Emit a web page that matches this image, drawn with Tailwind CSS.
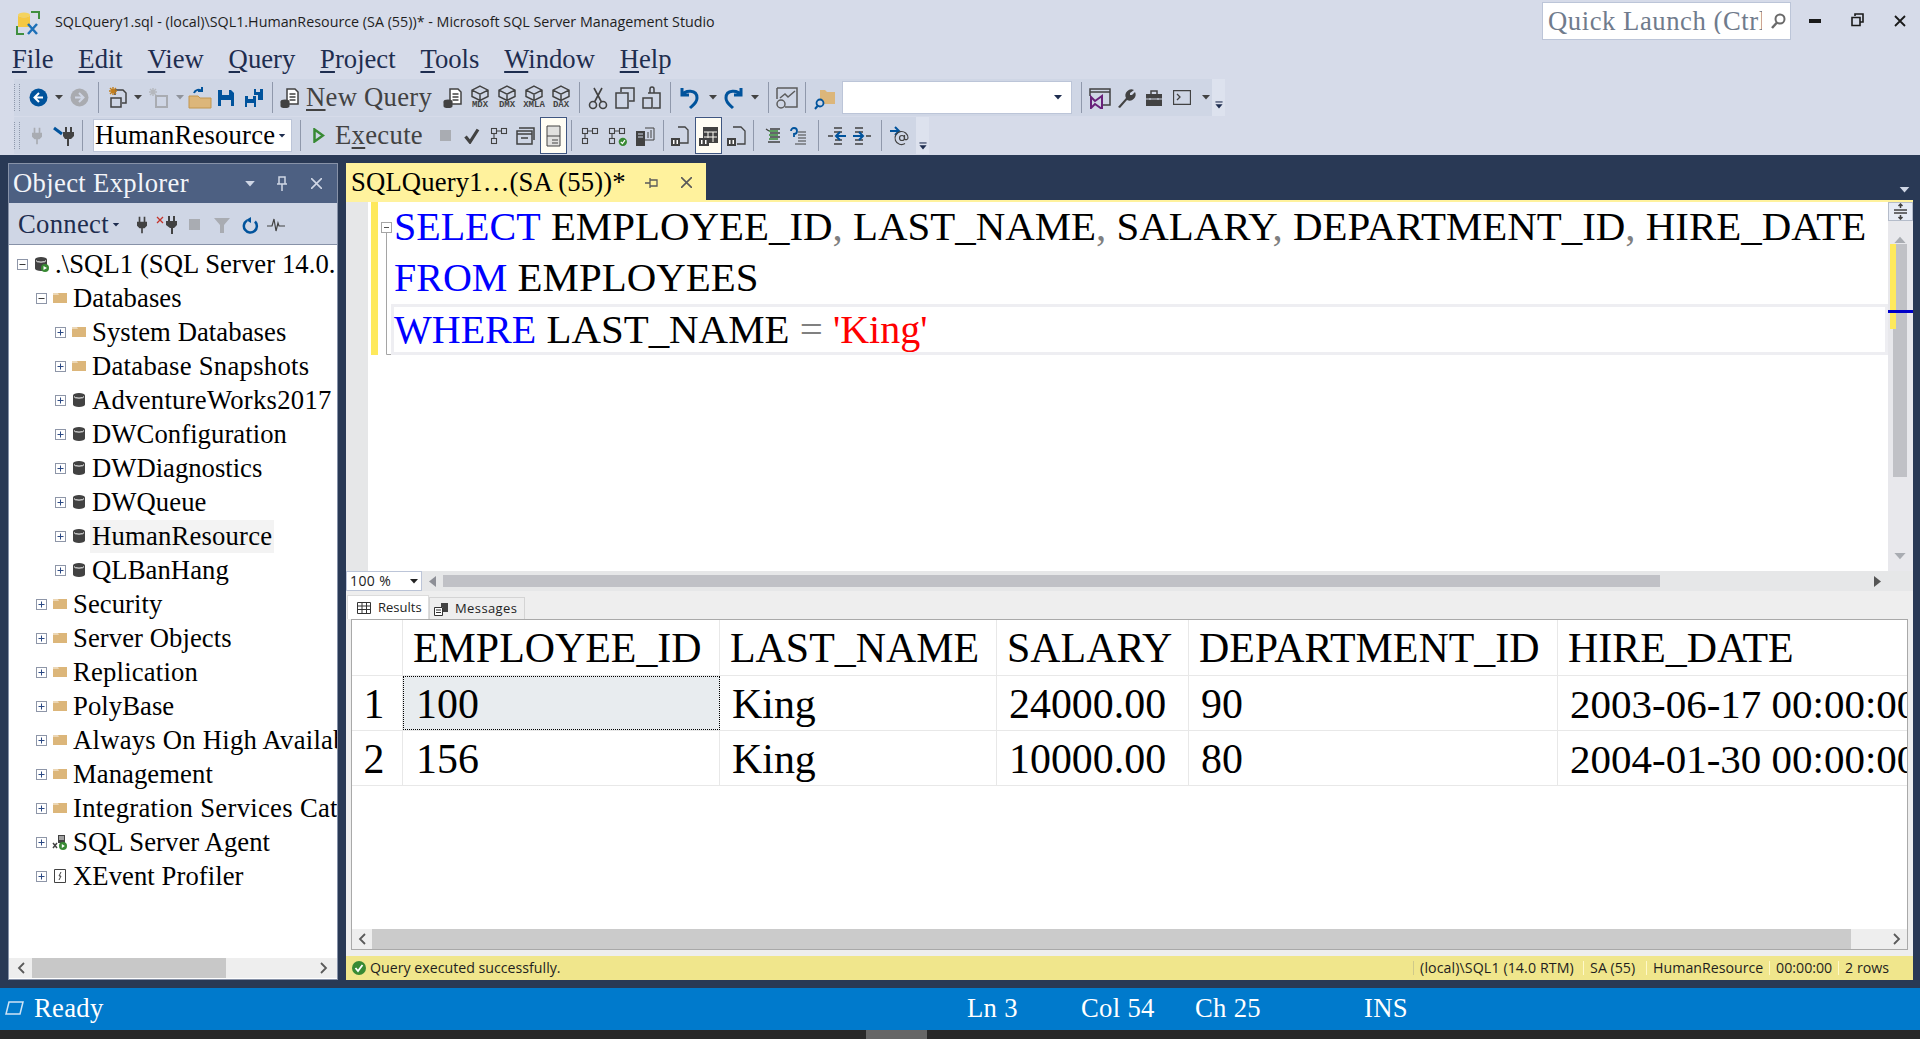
<!DOCTYPE html>
<html lang="en">
<head>
<meta charset="UTF-8">
<title>SQLQuery1.sql - Microsoft SQL Server Management Studio</title>
<script src="https://cdn.jsdelivr.net/npm/@tailwindcss/browser@4"></script>
</head>
<body class="h-[1039px] w-[1920px] overflow-hidden flex flex-col bg-[#d6dbe9] text-[26.67px] leading-none text-[#1e2d4f] font-['Liberation_Serif',serif]">

<!-- shared icons -->
<svg class="hidden">
  <defs>
    <symbol id="caret" viewBox="0 0 8 5"><path d="M0 0h8L4 4.500z" fill="currentColor"/></symbol>
    <symbol id="chev" viewBox="0 0 14 14"><path d="M2 2h10v1.500H2z" fill="currentColor"/><path d="M2 6h10L7 12z" fill="currentColor"/></symbol>
    <symbol id="plug" viewBox="0 0 24 24"><path d="M8 2h2v6H8zM14 2h2v6h-2zM6 8h12v5l-3 3h-2v6h-2v-6H9l-3-3z" fill="currentColor"/></symbol>
    <symbol id="doc" viewBox="0 0 24 24"><path d="M9 3h8l3 3v12H9z" fill="#fff" stroke="#424242" stroke-width="1.500"/><path d="M11.500 8h6M11.500 11h6M11.500 14h6" stroke="#424242" stroke-width="1.300"/><ellipse cx="7" cy="15.500" rx="4.500" ry="2" fill="#424242"/><path d="M2.500 16v4a4.500 2 0 0 0 9 0v-4z" fill="#424242"/></symbol>
    <symbol id="cube" viewBox="0 0 24 24"><path d="M12 3l7 3.500V12l-7 3.500L5 12V6.500zM5 6.500l7 3.500 7-3.500M12 10v5" fill="none" stroke="#424242" stroke-width="1.300"/></symbol>
    <symbol id="plan" viewBox="0 0 24 24" fill="none" stroke="#424242" stroke-width="1.300"><rect x="3" y="3" width="6" height="6"/><rect x="15" y="3" width="6" height="6"/><rect x="3" y="15" width="6" height="6"/><path d="M9 6h6M6 9v6"/></symbol>
    <symbol id="out" viewBox="0 0 24 24"><path d="M10 3h7l3 3v13h-9" fill="none" stroke="#424242" stroke-width="1.300"/><rect x="3" y="14" width="9" height="8" fill="#424242"/><path d="M5 16h1.500v4H5zM8.500 16H10v4H8.500z" fill="#fff"/></symbol>
    <symbol id="plus" viewBox="0 0 11 11"><rect x=".5" y=".5" width="10" height="10" fill="#fff" stroke="#8e96a8"/><path d="M2.500 5.500h6M5.500 2.500v6" stroke="#2c4a85"/></symbol>
    <symbol id="minus" viewBox="0 0 11 11"><rect x=".5" y=".5" width="10" height="10" fill="#fff" stroke="#8e96a8"/><path d="M2.500 5.500h6" stroke="#3b3b3b"/></symbol>
    <symbol id="folder" viewBox="0 0 16 16"><path d="M1 3h14v10H1z" fill="#dcb67a"/><path d="M1 3h5l1 2H1z" fill="#fff" opacity=".45"/></symbol>
    <symbol id="db" viewBox="0 0 16 16"><path d="M2 3.500a6 2.500 0 0 1 12 0v9a6 2.500 0 0 1-12 0z" fill="#424242"/><path d="M3 4.500a5 1.600 0 0 0 10 0" fill="none" stroke="#fff" stroke-width="1"/></symbol>
  </defs>
</svg>

<!-- title bar -->
<header class="h-[42px] flex items-start shrink-0">
  <svg class="w-[26px] h-[26px] ml-[15px] mt-[10px] shrink-0" viewBox="0 0 26 26">
    <path d="M16 2h8v7M2 16v8h7M2 2" fill="none" stroke="#3f8f3f" stroke-width="2"/>
    <ellipse cx="9" cy="5" rx="6" ry="2.500" fill="#f4d35e"/>
    <path d="M3 5v12h12V5a6 2.500 0 0 1-12 0z" fill="#f5c842"/>
    <path d="M13 24l9-10M22 24l-9-10" stroke="#1e70b8" stroke-width="2.500"/>
  </svg>
  <span class="ml-[14px] mt-[15px] text-[14.3px] text-[#1e1e1e] font-['Open_Sans',sans-serif] whitespace-nowrap">SQLQuery1.sql - (local)\SQL1.HumanResource (SA (55))* - Microsoft SQL Server Management Studio</span>
  <div class="ml-auto mt-[2px] w-[249px] h-[38px] bg-white border border-[#bcc5d8] flex items-center pl-[5px] text-[#707b8c] overflow-hidden">
    <span class="whitespace-nowrap w-[214px] overflow-hidden tracking-[0.55px]">Quick Launch (Ctrl+Q)</span>
    <svg class="w-[18px] h-[18px] ml-[7px] shrink-0 text-[#6a6a6a]" viewBox="0 0 18 18"><circle cx="11" cy="7" r="4.500" fill="none" stroke="currentColor" stroke-width="2"/><path d="M8 10.500L3 16" stroke="currentColor" stroke-width="2.500"/></svg>
  </div>
  <div class="w-[129px] flex items-start text-[#1a1a1a] shrink-0">
    <svg class="w-[12px] h-[4px] ml-[18px] mt-[19px]" viewBox="0 0 12 4"><path d="M0 0h12v4H0z" fill="currentColor"/></svg>
    <svg class="w-[13px] h-[14px] ml-[30px] mt-[13px]" viewBox="0 0 13 14"><path d="M4 3V1h8v8h-3M1 4.500h8v8H1z" fill="none" stroke="currentColor" stroke-width="1.600"/></svg>
    <svg class="w-[12px] h-[12px] ml-[30px] mt-[15px]" viewBox="0 0 12 12"><path d="M1 1l10 10M11 1L1 11" stroke="currentColor" stroke-width="1.800"/></svg>
  </div>
</header>

<!-- menu -->
<nav class="h-[35px] mb-[2px] flex items-center gap-[24.85px] pl-[12px] shrink-0">
  <span><span class="underline underline-offset-[3px]">F</span>ile</span>
  <span><span class="underline underline-offset-[3px]">E</span>dit</span>
  <span><span class="underline underline-offset-[3px]">V</span>iew</span>
  <span><span class="underline underline-offset-[3px]">Q</span>uery</span>
  <span><span class="underline underline-offset-[3px]">P</span>roject</span>
  <span><span class="underline underline-offset-[3px]">T</span>ools</span>
  <span><span class="underline underline-offset-[3px]">W</span>indow</span>
  <span><span class="underline underline-offset-[3px]">H</span>elp</span>
</nav>

<!-- toolbar 1 -->
<div class="h-[37px] flex ml-[14px] shrink-0 text-[#424242]">
  <div class="flex items-center bg-[#cfd6e5] h-full">
    <div class="w-[12px] flex"><div class="w-[6px] h-[27px] border-x border-dotted border-[#8f98ab]"></div></div>
    <div class="w-[24px] flex justify-center"><svg class="w-[19px] h-[19px]" viewBox="0 0 19 19"><circle cx="9.500" cy="9.500" r="9" fill="#00539c"/><path d="M10 5L5.500 9.500 10 14M6 9.500h8" fill="none" stroke="#fff" stroke-width="2"/></svg></div>
    <div class="w-[18px] flex justify-center"><svg class="w-[8px] h-[5px]"><use href="#caret"/></svg></div>
    <div class="w-[22px] flex justify-center"><svg class="w-[19px] h-[19px]" viewBox="0 0 19 19"><circle cx="9.500" cy="9.500" r="9" fill="#a9abb0"/><path d="M9 5l4.500 4.500L9 14M13 9.500H5" fill="none" stroke="#cfd6e5" stroke-width="2"/></svg></div>
    <div class="w-[16px] flex justify-center"><div class="w-px h-[31px] bg-[#8f98ab]"></div></div>
    <div class="w-[28px] flex justify-center"><svg class="w-[24px] h-[24px] -ml-[5px]" viewBox="0 0 24 24"><path d="M9 9V4h8l3 3v10h-4M5 12h10v9H5z" fill="none" stroke="#424242" stroke-width="1.500"/><path d="M7 1v8M3 5h8M4 2l6 6M10 2L4 8" stroke="#c27d1a" stroke-width="1.400"/></svg></div>
    <div class="w-[8px] flex justify-center"><svg class="w-[8px] h-[5px]"><use href="#caret"/></svg></div>
    <div class="w-[32px] flex justify-center"><svg class="w-[24px] h-[24px]" viewBox="0 0 24 24"><path d="M10 10h11v11H10z" fill="none" stroke="#a9acb2" stroke-width="2"/><path d="M7 2v8M3 6h8M4 3l6 6M10 3L4 9" stroke="#b5b8bd" stroke-width="1.400"/></svg></div>
    <div class="w-[12px] flex justify-center text-[#8f939b]"><svg class="w-[8px] h-[5px]"><use href="#caret"/></svg></div>
    <div class="w-[28px] flex justify-center"><svg class="w-[24px] h-[24px]" viewBox="0 0 24 24"><path d="M1 10h9l2 2h11v10H1z" fill="#dcb67a" stroke="#c2964f"/><path d="M6 7a5 5 0 0 1 8-2M14 1v4h-4" fill="none" stroke="#00539c" stroke-width="2"/></svg></div>
    <div class="w-[24px] flex justify-center"><svg class="w-[18px] h-[18px]" viewBox="0 0 18 18"><path d="M1 1h13l3 3v13H1z" fill="#00539c"/><path d="M5 1h7v5H5z" fill="#cfd6e5"/><path d="M4 11h10v6H4z" fill="#cfd6e5"/></svg></div>
    <div class="w-[32px] flex justify-center"><svg class="w-[20px] h-[20px]" viewBox="0 0 20 20"><path d="M1 8h11v11H1z" fill="#00539c"/><path d="M4 8h5v3H4zM3 15h7v4H3z" fill="#cfd6e5"/><path d="M10 1h9v11h-5V7h-4z" fill="#00539c"/><path d="M12 1h4v3h-4z" fill="#cfd6e5"/></svg></div>
    <div class="w-[4px] flex justify-center"><div class="w-px h-[31px] bg-[#8f98ab]"></div></div>
    <div class="w-[32px] flex justify-center"><svg class="w-[24px] h-[24px]"><use href="#doc"/></svg></div>
    <div class="w-[125px] whitespace-nowrap tracking-[0.27px]"><span class="underline underline-offset-[3px]">N</span>ew Query</div>
    <div class="w-[9px]"></div>
    <div class="w-[26px] flex justify-center"><svg class="w-[24px] h-[24px]"><use href="#doc"/></svg></div>
    <div class="w-[28px] flex flex-col items-center"><svg class="w-[22px] h-[16px]" viewBox="3 2 18 14"><use href="#cube" width="24" height="24"/></svg><span class="text-[9px] font-bold font-['Liberation_Mono',monospace]">MDX</span></div>
    <div class="w-[26px] flex flex-col items-center"><svg class="w-[22px] h-[16px]" viewBox="3 2 18 14"><use href="#cube" width="24" height="24"/></svg><span class="text-[9px] font-bold font-['Liberation_Mono',monospace]">DMX</span></div>
    <div class="w-[28px] flex flex-col items-center"><svg class="w-[22px] h-[16px]" viewBox="3 2 18 14"><use href="#cube" width="24" height="24"/></svg><span class="text-[9px] font-bold font-['Liberation_Mono',monospace]">XMLA</span></div>
    <div class="w-[26px] flex flex-col items-center"><svg class="w-[22px] h-[16px]" viewBox="3 2 18 14"><use href="#cube" width="24" height="24"/></svg><span class="text-[9px] font-bold font-['Liberation_Mono',monospace]">DAX</span></div>
    <div class="w-[10px] flex justify-center"><div class="w-px h-[31px] bg-[#8f98ab]"></div></div>
    <div class="w-[28px] flex justify-center"><svg class="w-[22px] h-[24px]" viewBox="0 0 22 24" fill="none" stroke="#424242" stroke-width="1.600"><circle cx="6" cy="19" r="3.500"/><circle cx="16" cy="19" r="3.500"/><path d="M7.500 16L15 2M14.500 16L7 2"/></svg></div>
    <div class="w-[26px] flex justify-center"><svg class="w-[20px] h-[22px]" viewBox="0 0 20 22" fill="none" stroke="#424242" stroke-width="1.500"><path d="M6 5V1h13v13h-5M1 6h12v15H1z"/></svg></div>
    <div class="w-[28px] flex justify-center"><svg class="w-[20px] h-[24px]" viewBox="0 0 20 24" fill="none" stroke="#424242" stroke-width="1.500"><path d="M6 7h12v15h-7M1 12h9v10H1zM8 7V3a2 2 0 0 1 4 0v4"/></svg></div>
    <div class="w-[8px] flex justify-center"><div class="w-px h-[31px] bg-[#8f98ab]"></div></div>
    <div class="w-[32px] flex justify-center"><svg class="w-[22px] h-[24px]" viewBox="0 0 22 24" fill="none" stroke="#00539c" stroke-width="3"><path d="M3 2v7h7M3 9c3-5 15-6 15 3 0 5-4 7-7 10"/></svg></div>
    <div class="w-[14px] flex justify-center"><svg class="w-[8px] h-[5px]"><use href="#caret"/></svg></div>
    <div class="w-[26px] flex justify-center"><svg class="w-[22px] h-[24px]" viewBox="0 0 22 24" fill="none" stroke="#00539c" stroke-width="3"><path d="M19 2v7h-7M19 9C16 4 4 3 4 12c0 5 4 7 7 10"/></svg></div>
    <div class="w-[18px] flex justify-center"><svg class="w-[8px] h-[5px]"><use href="#caret"/></svg></div>
    <div class="w-[8px] flex justify-center"><div class="w-px h-[31px] bg-[#8f98ab]"></div></div>
    <div class="w-[30px] flex justify-center"><svg class="w-[22px] h-[24px]" viewBox="0 0 22 24" fill="none" stroke="#5c5c5c" stroke-width="1.500"><path d="M1 2h20v19H9M1 2v11M4 12l5-4 3 3 7-6"/><circle cx="5" cy="18" r="4"/></svg></div>
    <div class="w-[6px] flex justify-center"><div class="w-px h-[31px] bg-[#8f98ab]"></div></div>
    <div class="w-[34px] flex justify-center"><svg class="w-[22px] h-[24px]" viewBox="0 0 22 24"><path d="M6 4h5l2 2h8v12H6z" fill="#dcb67a"/><circle cx="6" cy="17" r="3.500" fill="#cfd6e5" stroke="#00539c" stroke-width="1.800"/><path d="M3.500 20L1 23" stroke="#00539c" stroke-width="2"/></svg></div>
    <div class="w-[230px] h-[33px] bg-white border border-[#bcc5d8] flex items-center justify-end pr-[9px] text-[#1e2d4f]"><svg class="w-[8px] h-[5px]"><use href="#caret"/></svg></div>
    <div class="w-[18px] flex justify-center"><div class="w-px h-[31px] bg-[#8f98ab]"></div></div>
    <div class="w-[20px] flex justify-center"><svg class="w-[22px] h-[22px] shrink-0" viewBox="0 0 22 22"><path d="M1 5h20M1 9V2h20v16h-7" fill="none" stroke="#424242" stroke-width="1.500"/><path d="M2 10l4 4 7-5v13l-7-5-4 4z" fill="none" stroke="#68217a" stroke-width="2"/></svg></div>
    <div class="w-[34px] flex justify-center"><svg class="w-[20px] h-[20px]" viewBox="0 0 20 20"><path d="M1 19l8-9a6 6 0 0 1 8-8l-4 3v2h2l3-3a6 6 0 0 1-8 8l-7 8z" fill="#424242"/></svg></div>
    <div class="w-[20px] flex justify-center"><svg class="w-[18px] h-[18px] shrink-0" viewBox="0 0 18 18"><path d="M6 5V2h6v3" fill="none" stroke="#424242" stroke-width="1.500"/><path d="M1 5h16v12H1z" fill="#424242"/><path d="M1 10h16M5 9v2M13 9v2" stroke="#cfd6e5"/></svg></div>
    <div class="w-[36px] flex justify-center"><svg class="w-[18px] h-[15px]" viewBox="0 0 18 15" fill="none" stroke="#424242" stroke-width="1.300"><path d="M.5.500h17v14H.5zM4 4l3 3-3 3"/></svg></div>
    <div class="w-[12px] flex justify-center"><svg class="w-[8px] h-[5px]"><use href="#caret"/></svg></div>
  </div>
  <div class="w-[13px] h-full bg-[#dde2ee] flex items-end justify-center pb-[6px] text-[#1e2d4f]"><svg class="w-[10px] h-[10px]"><use href="#chev"/></svg></div>
</div>

<!-- toolbar 2 -->
<div class="h-[37px] mt-[1px] flex ml-[14px] shrink-0 text-[#424242]">
  <div class="flex items-center bg-[#cfd6e5] h-full">
    <div class="w-[12px] flex"><div class="w-[6px] h-[27px] border-x border-dotted border-[#8f98ab]"></div></div>
    <div class="w-[22px] flex justify-center text-[#a9acb2]"><svg class="w-[20px] h-[20px]"><use href="#plug"/></svg></div>
    <div class="w-[32px] flex justify-center"><svg class="w-[24px] h-[24px]" viewBox="0 0 24 24"><path d="M13 3h2v5h-2zM18 3h2v5h-2zM11 8h11v4l-3 3h-2v7h-2v-7h-2l-2-3z" fill="#424242"/><path d="M2 4l8 6" stroke="#00539c" stroke-width="3"/></svg></div>
    <div class="w-[4px] flex justify-center"><div class="w-px h-[31px] bg-[#8f98ab]"></div></div>
    <div class="w-[9px]"></div>
    <div class="w-[199px] h-[33px] bg-white border border-[#bcc5d8] flex items-center pl-[1px] text-black">
      <span class="whitespace-nowrap tracking-[0.2px]">HumanResource</span>
      <svg class="w-[8px] h-[4px] ml-[3px] text-[#1e2d4f]"><use href="#caret"/></svg>
    </div>
    <div class="w-[16px] flex justify-center"><div class="w-px h-[31px] bg-[#8f98ab]"></div></div>
    <div class="w-[22px] flex justify-center"><svg class="w-[12px] h-[15px]" viewBox="0 0 12 15"><path d="M1.500 1.500L10 7.500l-8.500 6z" fill="none" stroke="#388a34" stroke-width="2.500"/></svg></div>
    <div class="w-[5px]"></div>
    <div class="w-[88px] whitespace-nowrap tracking-[0.3px]">E<span class="underline underline-offset-[3px]">x</span>ecute</div>
    <div class="w-[10px]"></div>
    <div class="w-[24px] flex justify-center"><div class="w-[11px] h-[11px] bg-[#a9acb2]"></div></div>
    <div class="w-[30px] flex justify-center"><svg class="w-[16px] h-[16px]" viewBox="0 0 16 16"><path d="M1.500 8.500L6 14 14 1.500" fill="none" stroke="#424242" stroke-width="3.200"/></svg></div>
    <div class="w-[24px] flex justify-center"><svg class="w-[20px] h-[20px]"><use href="#plan"/></svg></div>
    <div class="w-[29px] flex justify-center"><svg class="w-[19px] h-[18px]" viewBox="0 0 19 18" fill="none" stroke="#424242" stroke-width="1.500"><path d="M3 1h15v12M1 4h15v13H1zM1 7h15M5 11h7"/></svg></div>
    <div class="w-[27px] h-full border border-[#3f5681] bg-[#fffdf4] flex items-center justify-center"><svg class="w-[15px] h-[22px]" viewBox="0 0 15 22"><path d="M1 1h13v20H1z" fill="#e0e0de" stroke="#424242"/><path d="M1 11h13M6 15h6M6 18h6" stroke="#424242"/></svg></div>
    <div class="w-[8px] flex justify-center"><div class="w-px h-[31px] bg-[#8f98ab]"></div></div>
    <div class="w-[30px] flex justify-center"><svg class="w-[20px] h-[20px]"><use href="#plan"/></svg></div>
    <div class="w-[24px] flex justify-center"><svg class="w-[20px] h-[20px] overflow-visible" viewBox="0 0 24 24"><use href="#plan" width="24" height="24"/><circle cx="19" cy="19" r="5" fill="#388a34"/><path d="M16.500 19l2 2 3-4" fill="none" stroke="#fff" stroke-width="1.500"/></svg></div>
    <div class="w-[32px] flex justify-center"><svg class="w-[20px] h-[20px]" viewBox="0 0 20 20"><path d="M1 5h9v15H1z" fill="#424242"/><path d="M3 8h5M3 11h5" stroke="#cfd6e5"/><path d="M10 2h9v12h-9" fill="none" stroke="#424242"/><path d="M13 6v6M16 4v8" stroke="#424242"/></svg></div>
    <div class="w-[4px] flex justify-center"><div class="w-px h-[31px] bg-[#8f98ab]"></div></div>
    <div class="w-[30px] flex justify-center"><svg class="w-[24px] h-[24px]"><use href="#out"/></svg></div>
    <div class="w-[27px] h-full border border-[#3f5681] bg-[#fffdf4] flex items-center justify-center"><svg class="w-[24px] h-[24px]" viewBox="0 0 24 24"><path d="M6 3h15v16H6z" fill="#424242"/><path d="M7 8h13M7 13h13M11 8v10M16 8v10" stroke="#fffdf4"/><rect x="2" y="14" width="10" height="8" fill="#424242"/><path d="M4 16h1.500v4H4zM8 16h1.500v4H8z" fill="#fff"/></svg></div>
    <div class="w-[27px] flex justify-center"><svg class="w-[24px] h-[24px]" viewBox="0 0 24 24"><path d="M9 3h8l4 4v13H13" fill="none" stroke="#424242" stroke-width="1.300"/><rect x="3" y="14" width="9" height="8" fill="#424242"/><path d="M5 16h1.500v4H5zM8.500 16H10v4H8.500z" fill="#fff"/></svg></div>
    <div class="w-[8px] flex justify-center"><div class="w-px h-[31px] bg-[#8f98ab]"></div></div>
    <div class="w-[3px]"></div>
    <div class="w-[26px] flex justify-center"><svg class="w-[16px] h-[16px]" viewBox="0 0 16 16"><path d="M1 1l3 2M5 1h10M5 5h10M5 9h10M3 14h12" stroke="#424242" stroke-width="1.300"/><path d="M4 3h9M4 7h9M4 11h9" stroke="#388a34" stroke-width="1.300"/></svg></div>
    <div class="w-[24px] flex justify-center"><svg class="w-[18px] h-[18px]" viewBox="0 0 18 18"><path d="M2 4a3 3 0 1 1 3 3v3" fill="none" stroke="#00539c" stroke-width="1.800"/><path d="M9 5h8M9 8h8M9 11h8M9 14h8M6 17h11" stroke="#424242" stroke-width="1.200"/></svg></div>
    <div class="w-[16px] flex justify-center"><div class="w-px h-[31px] bg-[#8f98ab]"></div></div>
    <div class="w-[22px] flex justify-center"><svg class="w-[20px] h-[18px]" viewBox="0 0 20 18"><path d="M7 1h8M7 17h8M1 9h5M7 5h8M8 13h7" stroke="#424242" stroke-width="1.500"/><path d="M19 9h-9M13 5l-4 4 4 4" fill="none" stroke="#00539c" stroke-width="2"/></svg></div>
    <div class="w-[28px] flex justify-center"><svg class="w-[20px] h-[18px]" viewBox="0 0 20 18"><path d="M3 1h8M3 17h8M14 9h5M3 5h8M3 13h8" stroke="#424242" stroke-width="1.500"/><path d="M1 9h9M7 5l4 4-4 4" fill="none" stroke="#00539c" stroke-width="2"/></svg></div>
    <div class="w-[10px] flex justify-center"><div class="w-px h-[31px] bg-[#8f98ab]"></div></div>
    <div class="w-[26px] flex justify-center"><svg class="w-[20px] h-[20px]" viewBox="0 0 20 20"><path d="M1 5h8M6 1l4 4-4 4" fill="none" stroke="#00539c" stroke-width="2"/><circle cx="13" cy="12" r="2.500" fill="none" stroke="#424242" stroke-width="1.200"/><path d="M15.500 9v4a2 2 0 0 0 3.500-1 6.500 6.500 0 1 0-3 5.500" fill="none" stroke="#424242" stroke-width="1.200"/></svg></div>
    <div class="w-[4px]"></div>
  </div>
  <div class="w-[13px] h-full bg-[#dde2ee] flex items-end justify-center pb-[3px] text-[#1e2d4f]"><svg class="w-[10px] h-[10px]"><use href="#chev"/></svg></div>
</div>

<!-- main -->
<main class="mt-[1px] flex-1 min-h-0 bg-[#293955] flex pt-[8px] pb-[8px] pl-[8px] pr-[7px] gap-[8px]">

  <!-- object explorer -->
  <section class="w-[330px] shrink-0 flex flex-col border border-[#8792a8] bg-white text-black overflow-hidden">
    <div class="h-[39px] shrink-0 bg-[#4d6082] flex items-center text-[#f3f5f9] pl-[4px]">
      <span class="w-[228px] whitespace-nowrap tracking-[0.33px]">Object Explorer</span>
      <svg class="w-[10px] h-[6px] ml-[4px] text-[#cfd6e5]"><use href="#caret"/></svg>
      <svg class="w-[10px] h-[15px] ml-[22px]" viewBox="0 0 10 15" fill="none" stroke="#cfd6e5" stroke-width="1.500"><path d="M2 1h6v7H2zM0 8h10M5 8v7"/></svg>
      <svg class="w-[11px] h-[11px] ml-[24px]" viewBox="0 0 11 11" stroke="#cfd6e5" stroke-width="1.600"><path d="M0 0l11 11M11 0L0 11"/></svg>
    </div>
    <div class="h-[42px] shrink-0 bg-[#cfd6e5] border-b border-[#8792a8] flex items-center pl-[9px] pt-[2px] text-[#1e2d4f]">
      <span class="whitespace-nowrap tracking-[0.3px]">Connect</span>
      <svg class="w-[8px] h-[4px] ml-[3px]"><use href="#caret"/></svg>
      <svg class="w-[20px] h-[20px] ml-[12px] text-[#424242]"><use href="#plug"/></svg>
      <svg class="w-[24px] h-[20px] ml-[4px]" viewBox="0 0 24 20"><path d="M1 2l6 6M7 2L1 8" stroke="#c5332a" stroke-width="1.300"/><path d="M12 1h2v5h-2zM17 1h2v5h-2zM10 6h11v4l-3 3h-1v6h-2v-6h-1l-4-3z" fill="#424242"/></svg>
      <div class="w-[11px] h-[11px] bg-[#a9acb2] ml-[9px]"></div>
      <svg class="w-[16px] h-[16px] ml-[14px]" viewBox="0 0 16 16"><path d="M0 1h16l-6 7v8H6V8z" fill="#a9acb2"/></svg>
      <svg class="w-[17px] h-[18px] ml-[12px]" viewBox="0 0 17 18" fill="none" stroke="#00539c" stroke-width="2.500"><path d="M5 4.500a6.500 6.500 0 1 0 8 1"/><path d="M9 1v6l-5-3z" fill="#00539c" stroke="none"/></svg>
      <svg class="w-[18px] h-[14px] ml-[8px]" viewBox="0 0 18 14" fill="none" stroke="#424242" stroke-width="1.200"><path d="M0 8h5l2-7 2 12 2-8 1 3h6"/></svg>
    </div>
    <div class="flex-1 min-h-0 pt-[2px] overflow-hidden whitespace-nowrap tracking-[0.07px]">
      <div class="h-[34px] flex items-center pl-[8px]"><svg class="w-[11px] h-[11px] shrink-0"><use href="#minus"/></svg><svg class="w-[16px] h-[16px] ml-[5px] shrink-0" viewBox="0 0 16 16"><use href="#db" width="16" height="16"/><circle cx="12" cy="12" r="4" fill="#388a34"/><path d="M10.500 10l3.500 2-3.500 2z" fill="#fff"/></svg><span class="ml-[6px]">.\SQL1 (SQL Server 14.0.1000 - SQL1\SA)</span></div>
      <div class="h-[34px] flex items-center pl-[27px]"><svg class="w-[11px] h-[11px] shrink-0"><use href="#minus"/></svg><svg class="w-[16px] h-[16px] ml-[5px] shrink-0"><use href="#folder"/></svg><span class="ml-[5px]">Databases</span></div>
      <div class="h-[34px] flex items-center pl-[46px]"><svg class="w-[11px] h-[11px] shrink-0"><use href="#plus"/></svg><svg class="w-[16px] h-[16px] ml-[5px] shrink-0"><use href="#folder"/></svg><span class="ml-[5px]">System Databases</span></div>
      <div class="h-[34px] flex items-center pl-[46px]"><svg class="w-[11px] h-[11px] shrink-0"><use href="#plus"/></svg><svg class="w-[16px] h-[16px] ml-[5px] shrink-0"><use href="#folder"/></svg><span class="ml-[5px] tracking-[0.27px]">Database Snapshots</span></div>
      <div class="h-[34px] flex items-center pl-[46px]"><svg class="w-[11px] h-[11px] shrink-0"><use href="#plus"/></svg><svg class="w-[16px] h-[16px] ml-[5px] shrink-0"><use href="#db"/></svg><span class="ml-[5px] tracking-[0.27px]">AdventureWorks2017</span></div>
      <div class="h-[34px] flex items-center pl-[46px]"><svg class="w-[11px] h-[11px] shrink-0"><use href="#plus"/></svg><svg class="w-[16px] h-[16px] ml-[5px] shrink-0"><use href="#db"/></svg><span class="ml-[5px]">DWConfiguration</span></div>
      <div class="h-[34px] flex items-center pl-[46px]"><svg class="w-[11px] h-[11px] shrink-0"><use href="#plus"/></svg><svg class="w-[16px] h-[16px] ml-[5px] shrink-0"><use href="#db"/></svg><span class="ml-[5px] tracking-normal">DWDiagnostics</span></div>
      <div class="h-[34px] flex items-center pl-[46px]"><svg class="w-[11px] h-[11px] shrink-0"><use href="#plus"/></svg><svg class="w-[16px] h-[16px] ml-[5px] shrink-0"><use href="#db"/></svg><span class="ml-[5px]">DWQueue</span></div>
      <div class="h-[34px] flex items-center pl-[46px]"><svg class="w-[11px] h-[11px] shrink-0"><use href="#plus"/></svg><svg class="w-[16px] h-[16px] ml-[5px] shrink-0"><use href="#db"/></svg><span class="ml-[3px] pl-[2px] pr-[2px] w-[184px] h-[33px] flex items-center bg-[#f3f3f3] tracking-[0.2px]">HumanResource</span></div>
      <div class="h-[34px] flex items-center pl-[46px]"><svg class="w-[11px] h-[11px] shrink-0"><use href="#plus"/></svg><svg class="w-[16px] h-[16px] ml-[5px] shrink-0"><use href="#db"/></svg><span class="ml-[5px]">QLBanHang</span></div>
      <div class="h-[34px] flex items-center pl-[27px]"><svg class="w-[11px] h-[11px] shrink-0"><use href="#plus"/></svg><svg class="w-[16px] h-[16px] ml-[5px] shrink-0"><use href="#folder"/></svg><span class="ml-[5px]">Security</span></div>
      <div class="h-[34px] flex items-center pl-[27px]"><svg class="w-[11px] h-[11px] shrink-0"><use href="#plus"/></svg><svg class="w-[16px] h-[16px] ml-[5px] shrink-0"><use href="#folder"/></svg><span class="ml-[5px]">Server Objects</span></div>
      <div class="h-[34px] flex items-center pl-[27px]"><svg class="w-[11px] h-[11px] shrink-0"><use href="#plus"/></svg><svg class="w-[16px] h-[16px] ml-[5px] shrink-0"><use href="#folder"/></svg><span class="ml-[5px] tracking-[0.2px]">Replication</span></div>
      <div class="h-[34px] flex items-center pl-[27px]"><svg class="w-[11px] h-[11px] shrink-0"><use href="#plus"/></svg><svg class="w-[16px] h-[16px] ml-[5px] shrink-0"><use href="#folder"/></svg><span class="ml-[5px]">PolyBase</span></div>
      <div class="h-[34px] flex items-center pl-[27px]"><svg class="w-[11px] h-[11px] shrink-0"><use href="#plus"/></svg><svg class="w-[16px] h-[16px] ml-[5px] shrink-0"><use href="#folder"/></svg><span class="ml-[5px] tracking-[0.25px]">Always On High Availability</span></div>
      <div class="h-[34px] flex items-center pl-[27px]"><svg class="w-[11px] h-[11px] shrink-0"><use href="#plus"/></svg><svg class="w-[16px] h-[16px] ml-[5px] shrink-0"><use href="#folder"/></svg><span class="ml-[5px]">Management</span></div>
      <div class="h-[34px] flex items-center pl-[27px]"><svg class="w-[11px] h-[11px] shrink-0"><use href="#plus"/></svg><svg class="w-[16px] h-[16px] ml-[5px] shrink-0"><use href="#folder"/></svg><span class="ml-[5px] tracking-[0.3px]">Integration Services Catalogs</span></div>
      <div class="h-[34px] flex items-center pl-[27px]"><svg class="w-[11px] h-[11px] shrink-0"><use href="#plus"/></svg><svg class="w-[16px] h-[16px] ml-[5px] shrink-0" viewBox="0 0 16 16"><path d="M6 1h7v8H6z" fill="#424242"/><path d="M7 3h5M7 5h5" stroke="#fff"/><path d="M1 9l4 5M5 9l-4 5" stroke="#424242" stroke-width="1.500"/><circle cx="11" cy="12" r="4" fill="#388a34"/><path d="M9.800 10l3 2-3 2z" fill="#fff"/></svg><span class="ml-[5px]">SQL Server Agent</span></div>
      <div class="h-[34px] flex items-center pl-[27px]"><svg class="w-[11px] h-[11px] shrink-0"><use href="#plus"/></svg><svg class="w-[16px] h-[16px] ml-[5px] shrink-0" viewBox="0 0 16 16" fill="none" stroke="#424242"><path d="M2.500 1.500h11v13h-11z"/><path d="M9 4L7 8h2l-2 4" stroke-width="1"/></svg><span class="ml-[5px]">XEvent Profiler</span></div>
    </div>
    <div class="h-[20px] shrink-0 bg-[#eeeeee] flex items-center text-[#5a5a5a] mb-[1px]">
      <svg class="w-[8px] h-[12px] ml-[8px]" viewBox="0 0 8 12" fill="none" stroke="currentColor" stroke-width="1.800"><path d="M7 1L2 6l5 5"/></svg>
      <div class="w-[194px] h-full bg-[#c8c8c8] ml-[7px]"></div>
      <svg class="w-[8px] h-[12px] ml-[94px]" viewBox="0 0 8 12" fill="none" stroke="currentColor" stroke-width="1.800"><path d="M1 1l5 5-5 5"/></svg>
    </div>
  </section>

  <!-- query window -->
  <section class="flex-1 min-w-0 flex flex-col">
    <div class="h-[39px] shrink-0 flex relative">
      <div class="w-[360px] h-full bg-[#fff29d] flex items-center pl-[5px] text-black">
        <span class="w-[287px] whitespace-nowrap tracking-[0.15px]">SQLQuery1…(SA (55))*</span>
        <svg class="w-[14px] h-[10px] ml-[7px] text-[#5a5a5a]" viewBox="0 0 14 10" fill="none" stroke="currentColor" stroke-width="1.300"><path d="M5 2h7v6H5zM5 5H0M5 0v10"/></svg>
        <svg class="w-[11px] h-[11px] ml-[22px] text-[#5a5a5a]" viewBox="0 0 11 11" stroke="currentColor" stroke-width="1.600"><path d="M0 0l11 11M11 0L0 11"/></svg>
      </div>
      <svg class="absolute right-[3px] top-[24px] w-[11px] h-[6px] text-[#cfd6e5]"><use href="#caret"/></svg>
      <div class="absolute left-0 right-0 bottom-0 h-[2px] bg-[#fff29d]"></div>
    </div>
    <div class="h-[369px] shrink-0 flex bg-white relative">
      <div class="w-[22px] bg-[#e6e7e8] shrink-0"></div>
      <div class="w-[26px] shrink-0 relative">
        <div class="ml-[3px] w-[7px] h-[153px] bg-[#fee95c]"></div>
        <svg class="absolute left-[13px] top-[20px] w-[14px] h-[134px]" viewBox="0 0 14 134" fill="none"><rect x=".5" y=".5" width="10" height="10" fill="#fff" stroke="#a5a5a5"/><path d="M3 5.500h5" stroke="#555"/><path d="M5.500 11v121.500H14" stroke="#a5a5a5"/></svg>
      </div>
      <div class="flex-1 min-w-0 text-[40.9px] text-black whitespace-nowrap -mt-[1px]">
        <div class="h-[52px] flex items-center"><span><span class="text-[#0000ff] text-[40px]">SELECT</span> EMPLOYEE_ID<span class="text-[#808080]">,</span> LAST_NAME<span class="text-[#808080]">,</span> SALARY<span class="text-[#808080]">,</span> DEPARTMENT_ID<span class="text-[#808080]">,</span> HIRE_DATE</span></div>
        <div class="h-[51px] flex items-center"><span><span class="text-[#0000ff] text-[40px]">FROM</span> EMPLOYEES</span></div>
        <div class="h-[51px] flex items-center relative"><div class="absolute -left-[3px] right-0 inset-y-0 border-[3px] border-[#eeeef2]"></div><span class="relative pt-[2px]"><span class="text-[#0000ff] text-[40px]">WHERE</span> LAST_NAME <span class="text-[#808080]">=</span> <span class="text-[#ff0000] text-[40px]">'King'</span></span></div>
      </div>
      <div class="w-[25px] shrink-0 bg-[#e8e8ec] relative flex flex-col">
        <div class="h-[19px] bg-[#e6ebf5] border border-[#b5bcca] flex items-center justify-center"><svg class="w-[13px] h-[17px]" viewBox="0 0 13 17" fill="none" stroke="#424242" stroke-width="1.500"><path d="M0 7h13M0 10h13M6.500 1v4M6.500 12v4M4.500 3l2-2 2 2M4.500 14l2 2 2-2"/></svg></div>
        <svg class="w-[12px] h-[7px] ml-[6px] mt-[15px] text-[#a9acb2] rotate-180"><use href="#caret"/></svg>
        <div class="mt-[1px] ml-[5px] w-[14px] h-[233px] bg-[#c0c1c6]"></div>
        <svg class="w-[12px] h-[7px] ml-[6px] mt-[76px] text-[#a9acb2]"><use href="#caret"/></svg>
        <div class="absolute left-[2px] top-[42px] w-[6px] h-[85px] bg-[#fee95c]"></div>
        <div class="absolute left-0 right-0 top-[108px] h-[3px] bg-[#0000c8]"></div>
      </div>
    </div>
    <div class="h-[20px] shrink-0 bg-[#e6e7e8] flex items-center text-[#444]">
      <div class="w-[76px] h-full bg-white border border-[#bcc5d8] flex items-center pl-[3px] text-[14px] tracking-[0.4px] font-['Open_Sans',sans-serif] text-[#222]">100 %<svg class="w-[8px] h-[5px] ml-auto mr-[3px]"><use href="#caret"/></svg></div>
      <svg class="w-[7px] h-[11px] ml-[7px] text-[#8d8f96]" viewBox="0 0 7 11"><path d="M7 0v11L0 5.500z" fill="currentColor"/></svg>
      <div class="w-[1217px] h-[12px] ml-[7px] bg-[#c0c1c6]"></div>
      <svg class="w-[7px] h-[11px] ml-[214px] text-[#555]" viewBox="0 0 7 11"><path d="M0 0v11l7-5.500z" fill="currentColor"/></svg>
    </div>
    <div class="flex-1 min-h-0 flex flex-col bg-[#eeeeee] font-['Open_Sans',sans-serif]">
      <div class="h-[28px] shrink-0 flex items-end text-[13px] text-[#222]">
        <div class="ml-[1px] w-[82px] h-[24px] bg-white border border-b-0 border-[#dcdcdc] flex items-center pl-[9px] gap-[7px]">
          <svg class="w-[14px] h-[12px] shrink-0" viewBox="0 0 14 12" fill="none" stroke="#333"><path d="M.5.500h13v11H.5zM.5 4h13M.5 7.500h13M5 .500v11M9.500 .500v11"/></svg>Results
        </div>
        <div class="w-[96px] h-[22px] bg-[#eeeeee] border border-b-0 border-[#d4d4d4] flex items-center pl-[4px] gap-[7px] tracking-[0.4px]">
          <svg class="w-[14px] h-[14px] shrink-0" viewBox="0 0 14 14"><path d="M.5 5.500h8v8h-8z" fill="#fff" stroke="#333"/><path d="M2 8h5M2 10.500h5" stroke="#333"/><path d="M7 1h7v9H9V5H7z" fill="#424242"/></svg>Messages
        </div>
      </div>
      <div class="mx-[5px] h-[331px] shrink-0 border border-[#a9a9a9] bg-white flex flex-col font-['Liberation_Serif',serif] text-[41.9px] text-black">
        <div class="flex-1 min-h-0 whitespace-nowrap overflow-hidden [&>div>div]:pt-[3px]">
          <div class="grid grid-cols-[51px_317px_277px_192px_369px_1fr] h-[56px] border-b border-[#e8e8e8] items-center">
            <div class="h-full border-r border-[#e8e8e8]"></div>
            <div class="h-full flex items-center pl-[10px] border-r border-[#e8e8e8]">EMPLOYEE_ID</div>
            <div class="h-full flex items-center pl-[10px] border-r border-[#e8e8e8]">LAST_NAME</div>
            <div class="h-full flex items-center pl-[10px] border-r border-[#e8e8e8]">SALARY</div>
            <div class="h-full flex items-center pl-[10px] border-r border-[#e8e8e8]">DEPARTMENT_ID</div>
            <div class="h-full flex items-center pl-[10px] overflow-hidden">HIRE_DATE</div>
          </div>
          <div class="grid grid-cols-[51px_317px_277px_192px_369px_1fr] h-[55px] border-b border-[#e8e8e8] items-center">
            <div class="h-full flex items-center justify-center pr-[6px] border-r border-[#e8e8e8]">1</div>
            <div class="h-full flex items-center pl-[13px] bg-[#e8ecef] outline outline-dotted outline-black -outline-offset-1">100</div>
            <div class="h-full flex items-center pl-[12px] border-r border-[#e8e8e8]">King</div>
            <div class="h-full flex items-center pl-[12px] border-r border-[#e8e8e8]">24000.00</div>
            <div class="h-full flex items-center pl-[12px] border-r border-[#e8e8e8]">90</div>
            <div class="h-full flex items-center pl-[12px] overflow-hidden text-[41px]">2003-06-17 00:00:00.000</div>
          </div>
          <div class="grid grid-cols-[51px_317px_277px_192px_369px_1fr] h-[55px] border-b border-[#e8e8e8] items-center">
            <div class="h-full flex items-center justify-center pr-[6px] border-r border-[#e8e8e8]">2</div>
            <div class="h-full flex items-center pl-[13px] border-r border-[#e8e8e8]">156</div>
            <div class="h-full flex items-center pl-[12px] border-r border-[#e8e8e8]">King</div>
            <div class="h-full flex items-center pl-[12px] border-r border-[#e8e8e8]">10000.00</div>
            <div class="h-full flex items-center pl-[12px] border-r border-[#e8e8e8]">80</div>
            <div class="h-full flex items-center pl-[12px] overflow-hidden text-[41px]">2004-01-30 00:00:00.000</div>
          </div>
        </div>
        <div class="h-[20px] shrink-0 bg-[#eeeeee] flex items-center text-[#5a5a5a]">
          <svg class="w-[8px] h-[12px] ml-[6px] shrink-0" viewBox="0 0 8 12" fill="none" stroke="currentColor" stroke-width="1.800"><path d="M7 1L2 6l5 5"/></svg>
          <div class="w-[1479px] h-full bg-[#cbcbcb] ml-[6px]"></div>
          <svg class="w-[8px] h-[12px] ml-[42px] shrink-0" viewBox="0 0 8 12" fill="none" stroke="currentColor" stroke-width="1.800"><path d="M1 1l5 5-5 5"/></svg>
        </div>
      </div>
      <div class="h-[5px] shrink-0"></div>
    </div>
    <div class="h-[24px] shrink-0 bg-[#f0e68c] flex items-center pl-[6px] text-[14.2px] text-[#1e1e1e] font-['Open_Sans',sans-serif] whitespace-nowrap">
      <svg class="w-[14px] h-[14px] shrink-0" viewBox="0 0 14 14"><circle cx="7" cy="7" r="7" fill="#388a34"/><path d="M3.500 7l2.500 3 4.500-6" fill="none" stroke="#fff" stroke-width="1.800"/></svg>
      <span class="ml-[4px]">Query executed successfully.</span>
      <div class="ml-auto flex items-center h-full pr-[24px]">
        <span class="w-[170px] pl-[6px] border-l border-[#cfc98a] tracking-[0.1px]">(local)\SQL1 (14.0 RTM)</span>
        <span class="w-[63px] pl-[6px] border-l border-[#fff9c9]">SA (55)</span>
        <span class="w-[123px] pl-[6px] border-l border-[#fff9c9]">HumanResource</span>
        <span class="w-[69px] pl-[6px] border-l border-[#fff9c9]">00:00:00</span>
        <span class="pl-[6px] border-l border-[#fff9c9]">2 rows</span>
      </div>
    </div>
  </section>
</main>

<!-- status bar -->
<footer class="h-[42px] shrink-0 bg-[#007acc] text-white flex items-center pb-[2px] tracking-[0.3px]">
  <svg class="w-[19px] h-[14px] ml-[5px]" viewBox="0 0 19 14" fill="none" stroke="#cfe4f5" stroke-width="1.500"><path d="M4 1h14l-3 12H1z"/></svg>
  <span class="ml-[10px] w-[933px]">Ready</span>
  <span class="w-[114px]">Ln 3</span>
  <span class="w-[114px]">Col 54</span>
  <span class="w-[169px]">Ch 25</span>
  <span>INS</span>
</footer>
<div class="h-[9px] shrink-0 bg-[#282828] overflow-hidden flex relative">
  <div class="ml-[866px] w-[61px] bg-[#666666]"></div>
  <span class="absolute left-[1784px] top-[7px] text-[13px] text-white font-['Open_Sans',sans-serif] whitespace-nowrap">12:12 PM</span>
</div>

</body>
</html>
